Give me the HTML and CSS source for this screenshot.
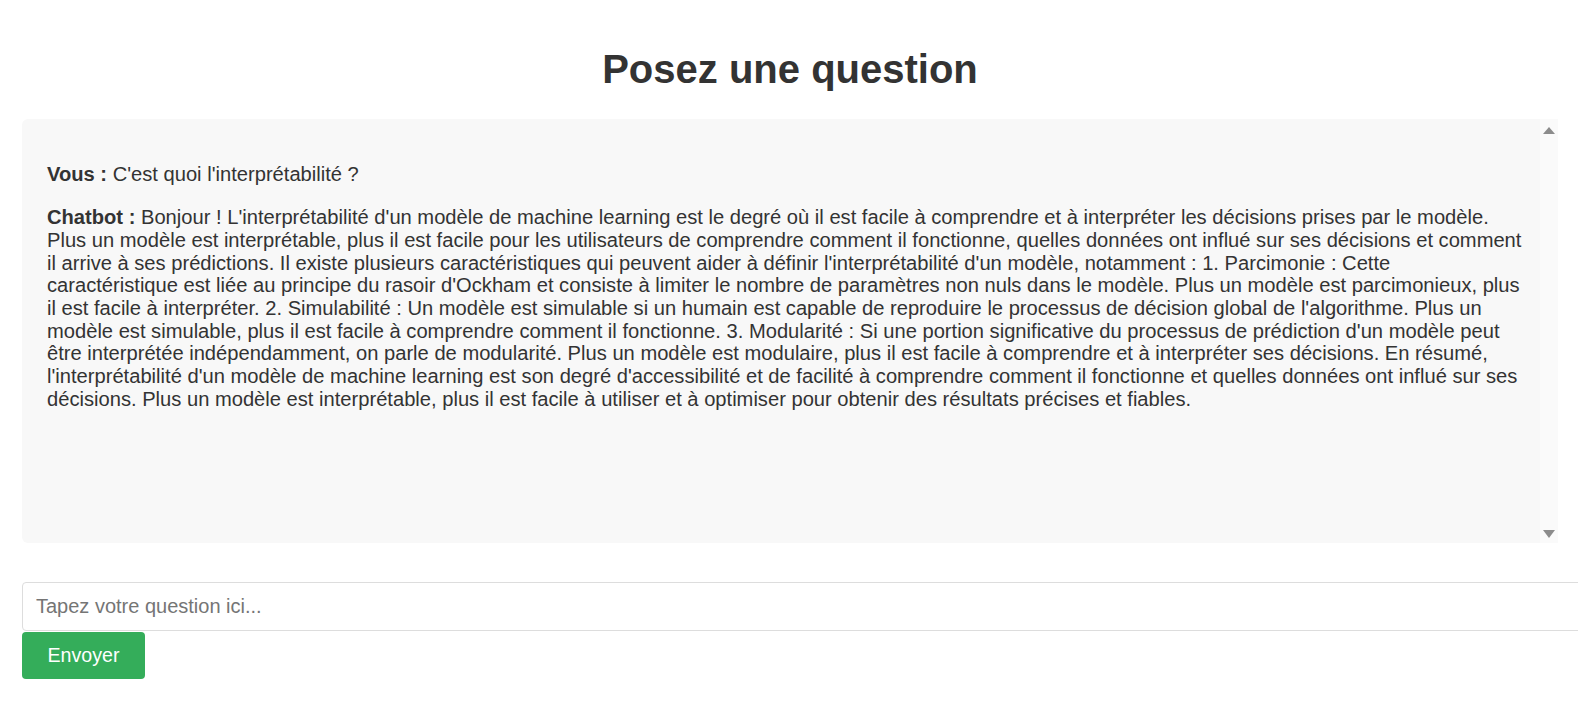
FILE: index.html
```html
<!DOCTYPE html>
<html lang="fr">
<head>
<meta charset="utf-8">
<title>Posez une question</title>
<link rel="stylesheet" href="styles.css">
</head>
<body>
<h1 class="title">Posez une question</h1>
<div class="chat">
  <div class="chat-content">
    <p class="msg"><strong>Vous :</strong> C'est quoi l'interprétabilité ?</p>
    <p class="msg"><strong>Chatbot :</strong> Bonjour ! L'interprétabilité d'un modèle de machine learning est le degré où il est facile à comprendre et à interpréter les décisions prises par le modèle. Plus un modèle est interprétable, plus il est facile pour les utilisateurs de comprendre comment il fonctionne, quelles données ont influé sur ses décisions et comment il arrive à ses prédictions. Il existe plusieurs caractéristiques qui peuvent aider à définir l'interprétabilité d'un modèle, notamment : 1. Parcimonie : Cette<br>caractéristique est liée au principe du rasoir d'Ockham et consiste à limiter le nombre de paramètres non nuls dans le modèle. Plus un modèle est parcimonieux, plus il est facile à interpréter. 2. Simulabilité : Un modèle est simulable si un humain est capable de reproduire le processus de décision global de l'algorithme. Plus un modèle est simulable, plus il est facile à comprendre comment il fonctionne. 3. Modularité : Si une portion significative du processus de prédiction d'un modèle peut être interprétée indépendamment, on parle de modularité. Plus un modèle est modulaire, plus il est facile à comprendre et à interpréter ses décisions. En résumé, l'interprétabilité d'un modèle de machine learning est son degré d'accessibilité et de facilité à comprendre comment il fonctionne et quelles données ont influé sur ses décisions. Plus un modèle est interprétable, plus il est facile à utiliser et à optimiser pour obtenir des résultats précises et fiables.</p>
  </div>
  <div class="scrollbar">
    <span class="arrow arrow-up"></span>
    <span class="arrow arrow-down"></span>
  </div>
</div>
<form class="ask">
  <input class="ask-input" type="text" placeholder="Tapez votre question ici...">
  <button class="ask-button" type="button">Envoyer</button>
</form>
</body>
</html>
```

FILE: styles.css
```css
html, body {
  margin: 0;
  padding: 0;
  background: #ffffff;
  overflow: hidden;
}

body {
  padding: 0 20px 0 22px;
  font-family: "Liberation Sans", Arial, sans-serif;
  color: #333333;
  font-size: 20px;
}

.title {
  margin: 46px 0 27px;
  font-size: 40px;
  line-height: 46px;
  font-weight: 700;
  text-align: center;
  color: #333333;
}

.chat {
  display: flex;
  height: 424px;
  background: #f8f8f8;
  border-radius: 6px 0 0 6px;
}

.chat-content {
  flex: 1;
  padding: 23.3px 10px 0 25px;
}

.msg {
  margin: 20.7px 0;
  font-size: 20.15px;
  line-height: 22.65px;
}

.msg strong {
  font-weight: 700;
}

.scrollbar {
  width: 18px;
  flex: none;
  background: #fafafa;
  display: flex;
  flex-direction: column;
  justify-content: space-between;
  align-items: center;
  padding: 8px 0 5px;
}

.arrow {
  width: 0;
  height: 0;
  border-left: 6px solid transparent;
  border-right: 6px solid transparent;
}

.arrow-up {
  border-bottom: 7px solid #8c8c8c;
}

.arrow-down {
  border-top: 8px solid #8c8c8c;
}

.ask {
  margin: 39px 0 0;
  display: flex;
  flex-direction: column;
  align-items: flex-start;
}

.ask-input {
  box-sizing: border-box;
  width: 1600px;
  height: 49px;
  margin: 0 0 1px;
  padding: 0 13px;
  border: 1px solid #dddddd;
  border-radius: 4px;
  font-family: "Liberation Sans", Arial, sans-serif;
  font-size: 20px;
  color: #333333;
  background: #ffffff;
}

.ask-input::placeholder {
  color: #757575;
}

.ask-button {
  width: 123px;
  height: 47px;
  border: none;
  border-radius: 4px;
  background: #34ad5a;
  color: #ffffff;
  font-family: "Liberation Sans", Arial, sans-serif;
  font-size: 19.6px;
  padding: 0;
}
```
